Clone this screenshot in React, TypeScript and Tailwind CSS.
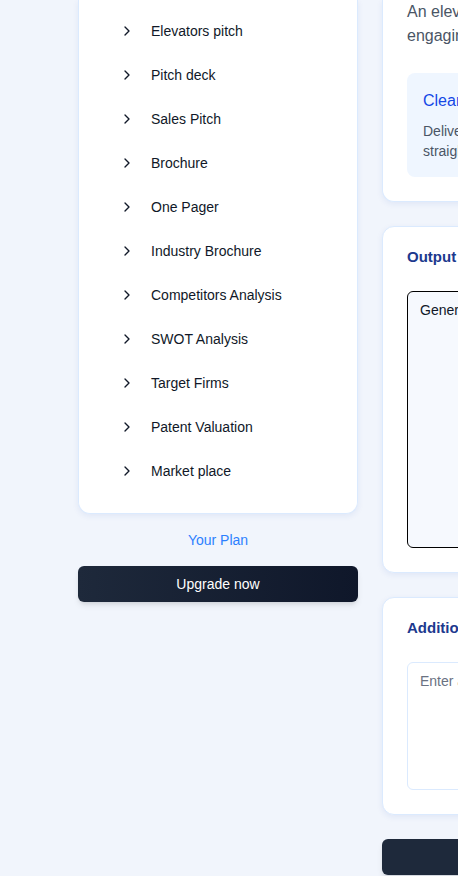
import React from "react";
import { ChevronRight } from "lucide-react";

const tools = [
  "Elevators pitch",
  "Pitch deck",
  "Sales Pitch",
  "Brochure",
  "One Pager",
  "Industry Brochure",
  "Competitors Analysis",
  "SWOT Analysis",
  "Target Firms",
  "Patent Valuation",
  "Market place",
];

export default function App() {
  return (
    <div className="w-[458px] h-[876px] overflow-hidden bg-[#f1f5fc] font-['Liberation_Sans',Arial,sans-serif]">
      <div className="flex items-start gap-6 pl-[78px]">
        {/* Sidebar */}
        <div className="w-[280px] shrink-0">
          <div className="bg-white border border-t-0 border-blue-100 rounded-b-xl shadow-[0_2px_6px_rgba(30,64,175,0.08)] pt-[9px] pb-5 pl-10">
            {tools.map((t) => (
              <div key={t} className="flex items-center gap-4 py-3 text-sm leading-5 text-gray-900">
                <ChevronRight size={16} strokeWidth={2} className="text-gray-900" />
                <span>{t}</span>
              </div>
            ))}
          </div>
          <div className="mt-4 mb-4 text-center text-sm leading-5 text-blue-500">Your Plan</div>
          <button className="w-full h-9 rounded-md bg-linear-to-r from-[#1e293b] to-[#0f172a] text-white text-sm shadow-md">
            Upgrade now
          </button>
        </div>

        {/* Main */}
        <div className="w-[600px] shrink-0 flex flex-col gap-6">
          <div className="bg-white border border-t-0 border-blue-100 rounded-b-xl shadow-[0_2px_6px_rgba(30,64,175,0.08)] px-6 pb-6">
            <p className="text-base leading-6 text-gray-600">
              <span className="block whitespace-nowrap">An elevator pitch is a short, persuasive summary that is</span>
              <span className="block whitespace-nowrap">engaging, memorable and easy to understand.</span>
            </p>
            <div className="mt-[25px] bg-blue-50 rounded-lg p-4">
              <div className="text-base leading-6 text-blue-700 mb-2">Clear and Concise</div>
              <p className="text-sm leading-5 text-gray-600">
                <span className="block whitespace-nowrap">Deliver your message in under 60 seconds, getting</span>
                <span className="block whitespace-nowrap">straight to the point.</span>
              </p>
            </div>
          </div>

          <div className="bg-white border border-blue-100 rounded-xl shadow-[0_2px_6px_rgba(30,64,175,0.08)] px-6 pt-[18px] pb-6">
            <div className="text-[15px] leading-6 font-bold text-blue-900 mb-[22px]">Output</div>
            <textarea
              readOnly
              value="Generated elevator pitch will appear here..."
              className="block w-full h-[257px] resize-none rounded-md border border-black bg-[#f6f9fe] px-3 py-2 text-sm leading-5 text-gray-900 outline-none"
            />
          </div>

          <div className="bg-white border border-blue-100 rounded-xl shadow-[0_2px_6px_rgba(30,64,175,0.08)] px-6 pt-[18px] pb-6">
            <div className="text-[15px] leading-6 font-bold text-blue-900 mb-[22px]">Additional Instructions</div>
            <textarea
              placeholder="Enter any additional instructions or details..."
              className="block w-full h-32 resize-none rounded-md border border-blue-100 bg-white px-3 py-2 text-sm leading-5 text-gray-900 placeholder:text-gray-500 outline-none"
            />
          </div>

          <button className="w-full h-9 rounded-md bg-[#1e293b] text-white text-sm shadow-md">
            Generate Elevator Pitch
          </button>
        </div>
      </div>
    </div>
  );
}
